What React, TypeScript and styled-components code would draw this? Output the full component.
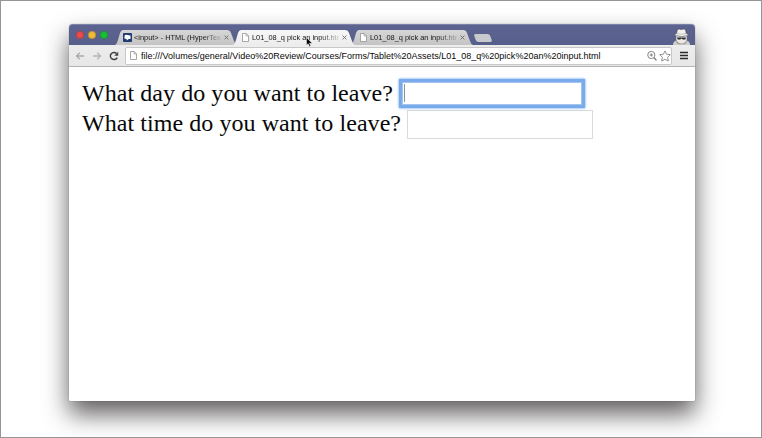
import React from "react";
import styled, { createGlobalStyle, css } from "styled-components";

const Global = createGlobalStyle`
  * { box-sizing: border-box; }
  html, body { margin: 0; padding: 0; overflow: hidden; background: #fff; }
`;

const Stage = styled.main`
  width: 762px;
  height: 438px;
  padding: 23px 66px 36px 68px;
  border: 1px solid #969696;
  background: #fff;
  overflow: hidden;
`;

const Window = styled.section`
  width: 626px;
  height: 377px;
  display: flex;
  flex-direction: column;
  border-radius: 4px 4px 1px 1px;
  background: #fff;
  box-shadow: 0 0 1px rgba(30, 25, 25, 0.65), 0 13px 25px rgba(30, 25, 25, 0.7);
  font-family: "Liberation Sans", Arial, sans-serif;
`;

const TitleBar = styled.header`
  height: 21px;
  flex: none;
  display: flex;
  align-items: flex-end;
  padding: 0 4px 0 7px;
  border-radius: 4px 4px 0 0;
  border-top: 1px solid #7b80a7;
  background: linear-gradient(#5d6390, #575f8b);
`;

const Lights = styled.div`
  display: flex;
  gap: 4px;
  margin: 0 7px 6px 0;
`;

const Light = styled.i<{ $color: string }>`
  width: 8px;
  height: 8px;
  border-radius: 50%;
  background: ${(p) => p.$color};
  border: 1px solid rgba(50, 30, 60, 0.25);
`;

const Tabs = styled.nav`
  display: flex;
  align-items: flex-end;
`;

const Tab = styled.div<{ $active?: boolean }>`
  position: relative;
  width: 122px;
  height: 15px;
  margin-right: -4px;
  padding: 0 9px 0 8px;
  display: flex;
  align-items: center;
  gap: 2px;
  clip-path: path("M0 15 C2 14 2 12 3 10 L5 3 Q6 0 8 0 L112 0 Q115 0 116 3 L119 11 C120 13 120 14 122 15 Z");
  background: ${(p) => (p.$active ? "linear-gradient(#f7f7f7, #ececec)" : "linear-gradient(#d6d6d6, #c4c4c4)")};
  color: #161616;
`;

const TabTitle = styled.span`
  width: 87px;
  flex: none;
  height: 11px;
  font-size: 7.4px;
  line-height: 11px;
  white-space: nowrap;
  mask-image: linear-gradient(90deg, #000 78%, rgba(0, 0, 0, 0.15) 100%);
`;

const TabClose = styled.svg`
  width: 5px;
  height: 5px;
  flex: none;
  margin-left: 1px;
`;

const NewTab = styled.div`
  width: 16px;
  height: 8px;
  margin: 0 0 3px 6px;
  border-radius: 2px;
  background: #c8c9cd;
  transform: skewX(20deg);
`;

const Incognito = styled.svg`
  width: 19px;
  height: 17px;
  margin-left: auto;
  align-self: flex-end;
`;

const Toolbar = styled.div`
  height: 22px;
  flex: none;
  display: flex;
  align-items: center;
  padding: 0 6px;
  background: linear-gradient(#ededed, #e7e7e7);
  border-bottom: 1px solid #b3b3b3;
`;

const NavButton = styled.svg<{ $gap: number }>`
  width: 10px;
  height: 10px;
  flex: none;
  margin-right: ${(p) => p.$gap}px;
`;

const Address = styled.div`
  width: 547px;
  height: 18px;
  flex: none;
  display: flex;
  align-items: center;
  padding: 0 0 0 3px;
  background: #fff;
  border: 1px solid #c8c8c8;
  border-radius: 2px;
  margin-right: 8px;
`;

const Url = styled.span`
  flex: 1;
  margin-left: 3px;
  font-size: 9px;
  line-height: 16px;
  letter-spacing: 0.01px;
  color: #080808;
  white-space: nowrap;
`;

const AddressIcon = styled.svg`
  width: 12px;
  height: 12px;
  flex: none;
  margin-left: 1px;
`;

const MenuIcon = styled.svg`
  width: 8px;
  height: 9px;
  flex: none;
`;

const PageIcon = styled.svg`
  width: 9px;
  height: 9px;
  flex: none;
`;

const Content = styled.form`
  flex: 1;
  padding: 11px 13px;
  font-family: "Liberation Serif", "Times New Roman", serif;
  font-size: 24px;
  letter-spacing: 0.06px;
  color: #080808;
`;

const Row = styled.div`
  height: 30px;
  display: flex;
  align-items: center;
`;

const Label = styled.label<{ $width: number }>`
  width: ${(p) => p.$width}px;
  flex: none;
  line-height: 30px;
  white-space: nowrap;
`;

const Field = styled.input<{ $focus?: boolean }>`
  width: 186px;
  height: 29px;
  flex: none;
  outline: none;
  border: 1px solid #d9d9d9;
  border-radius: 0;
  background: #fff;
  padding: 2px;
  margin: 2px 0 0;
  ${(p) =>
    p.$focus &&
    css`
      width: 180px;
      height: 23px;
      margin-top: 1px;
      border-color: #a5c4ef;
      box-shadow: 0 0 1px 3px #79abec, 0 0 3px 3px #8bb8f0;
    `}
`;

const FieldWrap = styled.div`
  position: relative;
  display: flex;
`;

const Caret = styled.i`
  position: absolute;
  left: 2px;
  top: 3px;
  width: 1px;
  height: 18px;
  background: #8b939d;
`;

const Pointer = styled.svg`
  position: absolute;
  left: 73px;
  top: 7px;
  width: 7px;
  height: 10px;
`;

const TabHolder = styled.div`
  position: relative;
  z-index: 3;
  display: flex;
`;

function Document() {
  return (
    <PageIcon viewBox="0 0 9 9">
      <path d="M1.5.5h3.7l2.3 2.4v5.6h-6z" fill="#fff" stroke="#929292" strokeWidth=".8" />
      <path d="M5.1.6V3h2.3" fill="none" stroke="#929292" strokeWidth=".7" />
    </PageIcon>
  );
}

function Favicon() {
  return (
    <PageIcon viewBox="0 0 9 9">
      <rect width="9" height="9" rx="1" fill="#203b72" />
      <path d="M1.7 2.3Q3 1.2 4.4 2.1L7.4 2.5 7.7 5.7 5.2 6.2 3.9 7.6 3.5 6 1.4 5.6z" fill="#fff" />
    </PageIcon>
  );
}

function Close() {
  return (
    <TabClose viewBox="0 0 5 5">
      <path d="M.6.6l3.8 3.8M4.4.6L.6 4.4" stroke="#6a6a6a" strokeWidth=".9" />
    </TabClose>
  );
}

export default function App() {
  return (
    <>
      <Global />
      <Stage>
        <Window>
          <TitleBar>
            <Lights>
              <Light $color="#e94b4c" />
              <Light $color="#eebd35" />
              <Light $color="#16bf35" />
            </Lights>
            <Tabs>
              <Tab>
                <Favicon />
                <TabTitle>&lt;input&gt; - HTML (HyperText</TabTitle>
                <Close />
              </Tab>
              <TabHolder>
                <Tab $active>
                  <Document />
                  <TabTitle>L01_08_q pick an input.htm</TabTitle>
                  <Close />
                </Tab>
                <Pointer viewBox="0 0 7 10">
                  <path d="M.5.5v7.7l1.7-1.5 1.3 2.9 1.3-.6-1.3-2.7h2.7z" fill="#080808" stroke="#eee" strokeWidth=".5" />
                </Pointer>
              </TabHolder>
              <Tab>
                <Document />
                <TabTitle>L01_08_q pick an input.htm</TabTitle>
                <Close />
              </Tab>
              <NewTab />
            </Tabs>
            <Incognito viewBox="0 0 19 17">
              <path d="M1 17q0-3.5 3-4.5h11q3 1 3 4.5z" fill="#d0cfcc" />
              <path d="M4 7h11v5q-1 4-5.5 4T4 12z" fill="#eae9e5" stroke="#62626b" strokeWidth=".5" />
              <path d="M4.5 5.5L5.4 1.5Q7 .5 9.3 1.5q2.5-1 4.2 0l.8 4 3.2 1.7q-7.9 3-16 0z" fill="#f2f1ee" stroke="#3c3e50" strokeWidth=".6" />
              <path d="M4.5 5.5q4.8 1.5 9.8 0" fill="none" stroke="#b5b4b3" strokeWidth=".8" />
              <path d="M5 9.4h4l.5.4.5-.4h4l-.7 2h-2.4l-1.4-1-1.4 1H5.7z" fill="#292a30" />
              <path d="M4 13.5l3 3M15 13.5l-3 3" stroke="#85847f" strokeWidth=".7" />
            </Incognito>
          </TitleBar>
          <Toolbar>
            <NavButton viewBox="0 0 10 10" $gap={7}>
              <path d="M9 5H1.5M4.8 1.7L1.5 5l3.3 3.3" fill="none" stroke="#ababab" strokeWidth="1.3" />
            </NavButton>
            <NavButton viewBox="0 0 10 10" $gap={7}>
              <path d="M1 5h7.5M5.2 1.7L8.5 5 5.2 8.3" fill="none" stroke="#b5b5b5" strokeWidth="1.3" />
            </NavButton>
            <NavButton viewBox="0 0 10 10" $gap={6}>
              <path d="M8.2 6.6A3.6 3.6 0 1 1 7.6 2.5" fill="none" stroke="#424242" strokeWidth="1.5" />
              <path d="M9.2.8v4H5.3z" fill="#424242" />
            </NavButton>
            <Address>
              <Document />
              <Url>file:///Volumes/general/Video%20Review/Courses/Forms/Tablet%20Assets/L01_08_q%20pick%20an%20input.html</Url>
              <AddressIcon viewBox="0 0 12 12">
                <circle cx="5.3" cy="5" r="3.6" fill="none" stroke="#777" strokeWidth=".9" />
                <path d="M8 7.8l2.5 2.6" stroke="#777" strokeWidth="1.3" />
                <path d="M3.7 5h3.2M5.3 3.4v3.2" stroke="#777" strokeWidth=".9" />
              </AddressIcon>
              <AddressIcon viewBox="0 0 12 12">
                <path d="M6 .9l1.6 3.3 3.7.5-2.7 2.6.7 3.7L6 9.3 2.7 11l.7-3.7L.7 4.7l3.7-.5z" fill="#fff" stroke="#858585" strokeWidth=".9" />
              </AddressIcon>
            </Address>
            <MenuIcon viewBox="0 0 8 9">
              <path d="M0 1.5h8M0 4.5h8M0 7.5h8" stroke="#292929" strokeWidth="1.5" />
            </MenuIcon>
          </Toolbar>
          <Content>
            <Row>
              <Label $width={320}>What day do you want to leave?</Label>
              <FieldWrap>
                <Field $focus aria-label="Day" />
                <Caret />
              </FieldWrap>
            </Row>
            <Row>
              <Label $width={325}>What time do you want to leave?</Label>
              <Field aria-label="Time" />
            </Row>
          </Content>
        </Window>
      </Stage>
    </>
  );
}
